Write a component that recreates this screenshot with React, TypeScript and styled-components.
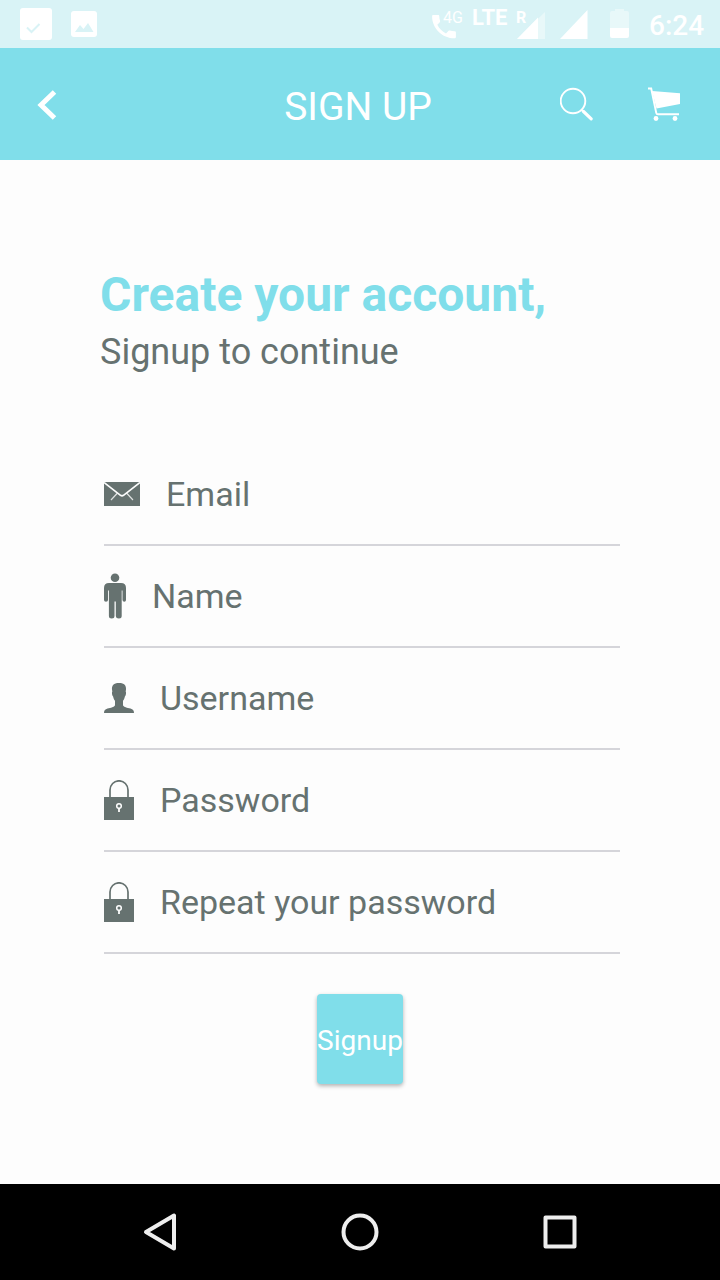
import React from "react";
import styled, { createGlobalStyle } from "styled-components";

const aqua = "#80deea";
const slate = "#667270";

const GlobalStyle = createGlobalStyle`
  * { box-sizing: border-box; }
  body {
    margin: 0;
    background: #fdfdfd;
    font-family: Roboto, "Liberation Sans", sans-serif;
  }
`;

const Page = styled.div`
  display: flex;
  flex-direction: column;
  min-height: 100vh;
`;

const StatusBar = styled.div`
  display: flex;
  align-items: center;
  justify-content: space-between;
  height: 48px;
  padding: 0 16px 0 20px;
  background: #d9f3f6;
  color: #fff;
`;

const StatusGroup = styled.div<{ $gap: number }>`
  display: flex;
  align-items: center;
  gap: ${(p) => p.$gap}px;
`;

const Indicator = styled.div`
  position: relative;
  display: flex;
`;

const Badge = styled.span<{ $left: number; $top: number; $bold?: boolean }>`
  position: absolute;
  left: ${(p) => p.$left}px;
  top: ${(p) => p.$top}px;
  font-size: 16px;
  line-height: 16px;
  font-weight: ${(p) => (p.$bold ? 700 : 400)};
`;

const Network = styled.span`
  width: 36px;
  height: 32px;
  font-size: 22px;
  line-height: 20px;
  font-weight: 700;
`;

const Clock = styled.time`
  width: 55px;
  padding-top: 4px;
  font-size: 28px;
  line-height: 32px;
  font-weight: 500;
  white-space: nowrap;
`;

const Header = styled.header`
  display: grid;
  grid-template-columns: 1fr auto 1fr;
  align-items: center;
  height: 112px;
  padding: 2px 40px 0 36px;
  background: ${aqua};
  color: #fff;
`;

const HeaderTitle = styled.h1`
  margin: 0;
  padding-top: 4px;
  font-size: 39px;
  line-height: 44px;
  font-weight: 400;
`;

const Actions = styled.div`
  display: flex;
  justify-content: flex-end;
  gap: 52px;
`;

const IconButton = styled.button`
  display: flex;
  align-items: center;
  justify-self: start;
  padding: 0;
  border: 0;
  background: none;
  color: inherit;
  cursor: pointer;
`;

const Main = styled.main`
  flex: 1;
  padding: 107px 100px 100px;
`;

const Heading = styled.h2`
  margin: 0 0 8px;
  color: ${aqua};
  font-size: 48px;
  line-height: 56px;
  font-weight: 700;
`;

const Subheading = styled.p`
  margin: 0;
  color: ${slate};
  font-size: 36px;
  line-height: 42px;
`;

const Form = styled.form`
  display: flex;
  flex-direction: column;
  margin: 71px 0 0 4px;
`;

const Field = styled.label`
  display: flex;
  align-items: center;
  gap: 26px;
  height: 102px;
  border-bottom: 2px solid #d5d5da;
  color: ${slate};

  svg { flex: none; }
`;

const Input = styled.input`
  flex: 1;
  min-width: 0;
  padding: 0;
  border: 0;
  outline: 0;
  background: none;
  color: ${slate};
  font-family: inherit;
  font-size: 34px;
  line-height: 42px;

  &::placeholder { color: ${slate}; opacity: 1; }
`;

const SubmitRow = styled.div`
  display: flex;
  justify-content: center;
  padding: 40px 4px 0 0;
`;

const SubmitButton = styled.button`
  height: 90px;
  padding: 4px 0 0;
  border: 0;
  border-radius: 4px;
  background: ${aqua};
  box-shadow: 0 2px 4px rgba(0, 0, 0, 0.3);
  color: #fff;
  font-family: inherit;
  font-size: 28px;
  line-height: 32px;
  cursor: pointer;
`;

const NavBar = styled.nav`
  display: grid;
  grid-template-columns: repeat(3, 1fr);
  height: 96px;
  padding: 0 60px;
  background: #000;
  color: #eee;
`;

const NavButton = styled(IconButton)`
  justify-self: stretch;
  justify-content: center;
`;

const TaskIcon = () => (
  <svg width="32" height="32" viewBox="0 0 32 32" aria-hidden="true">
    <rect width="32" height="32" rx="3" fill="#fff" />
    <path d="M7 19.500l4.500 4.500 8-8" fill="none" stroke="#d9f3f6" strokeWidth="2" />
  </svg>
);

const PhotoIcon = () => (
  <svg width="26" height="26" viewBox="0 0 26 26" aria-hidden="true">
    <rect width="26" height="26" rx="3" fill="#fff" />
    <path d="M4 21l5-7 3.500 4 4.500-6 5.500 9z" fill="#d9f3f6" />
  </svg>
);

const CallIcon = () => (
  <svg width="32" height="32" viewBox="0 0 32 32" fill="currentColor" aria-hidden="true">
    <path d="M1.300 7h4.800c.7 0 1.200.5 1.200 1.200 0 1.700.3 3.300.8 4.800.1.500 0 1-.3 1.300l-2.500 2.500c1.900 3.800 4.900 6.700 8.700 8.600l2.600-2.600c.4-.4.900-.5 1.300-.3 1.500.5 3 .7 4.700.7.700 0 1.300.5 1.300 1.200V29c0 .7-.6 1.300-1.300 1.300C10.100 30.300.1 20.300.1 8.200.1 7.500.6 7 1.300 7z" />
  </svg>
);

const SignalIcon = ({ weak, width }: { weak?: boolean; width: number }) => (
  <svg width={width} height="32" viewBox={`0 0 ${width} 32`} fill="currentColor" aria-hidden="true">
    {weak ? (
      <>
        <path d="M29 4v27H1z" opacity="0.4" />
        <path d="M22 9.500v21.500H1z" />
      </>
    ) : (
      <path d="M27.500 2v29H0z" />
    )}
  </svg>
);

const BatteryIcon = () => (
  <svg width="31" height="32" viewBox="0 0 31 32" fill="currentColor" aria-hidden="true">
    <path d="M0 5q0-2 2-2h3V1h9v2h3q2 0 2 2v15H0z" opacity="0.4" />
    <path d="M0 20h19v8q0 2-2 2H2q-2 0-2-2z" />
  </svg>
);

const BackIcon = () => (
  <svg width="24" height="32" viewBox="0 0 24 32" fill="none" stroke="currentColor" strokeWidth="5" aria-hidden="true">
    <path d="M18.500 3L5 16 18.500 29" />
  </svg>
);

const SearchIcon = () => (
  <svg width="36" height="36" viewBox="0 0 36 36" fill="none" stroke="currentColor" aria-hidden="true">
    <circle cx="13" cy="14" r="12.300" strokeWidth="1.900" />
    <path d="M21.500 23l2.500 2" strokeWidth="2.200" />
    <path d="M23.500 24.500l7.700 7.300" strokeWidth="3.200" strokeLinecap="round" />
  </svg>
);

const CartIcon = () => (
  <svg width="32" height="36" viewBox="0 0 32 36" fill="currentColor" aria-hidden="true">
    <path d="M4 4l28 2.200v10.800L8.500 21.500z" />
    <path d="M0 1.500h3.200l5 24.200c.2 1 .8 1.600 1.800 1.600H31" fill="none" stroke="currentColor" strokeWidth="1.900" />
    <circle cx="8" cy="31.500" r="2.400" />
    <circle cx="27" cy="31.500" r="2.400" />
  </svg>
);

const MailIcon = () => (
  <svg width="36" height="24" viewBox="0 0 36 24" aria-hidden="true">
    <rect width="36" height="24" fill="currentColor" />
    <path d="M0 0.500L16.500 13.300q1.500 1 3 0L36 0.500" fill="none" stroke="#fdfdfd" strokeWidth="1.700" />
    <path d="M13.500 11L7 18M22.500 11l6.500 7" fill="none" stroke="#fdfdfd" strokeWidth="1.200" opacity="0.8" />
  </svg>
);

const PersonIcon = () => (
  <svg width="22" height="46" viewBox="0 0 22 46" fill="currentColor" aria-hidden="true">
    <circle cx="11" cy="4.700" r="4.300" />
    <path d="M5 10h12q5 0 5 5v12q0 1.800-1.700 1.800T18.500 27V17.500h-.8V43q0 2.500-2.800 2.500T11.800 43V28.500h-1.300V43q0 2.500-2.800 2.500T4.900 43V17.500H4V27q0 1.800-2 1.800T0 27V15q0-5 5-5z" />
  </svg>
);

const UserIcon = () => (
  <svg width="30" height="30" viewBox="0 0 30 30" fill="currentColor" aria-hidden="true">
    <path d="M15 0c5.500 0 7.300 2.700 7 6.500l-.3 2c.7.800.3 4-.8 5-.4 2-1 3.200-1.900 4.300v4.400c1 2.300 4 2.200 7.500 3.400 2.300.8 3.500 2 3.500 4.400H0c0-2.400 1.200-3.600 3.500-4.400 3.500-1.200 6.500-1.100 7.500-3.400v-4.400c-.9-1.100-1.500-2.300-1.900-4.300-1.100-1-1.500-4.200-.8-5L8 6.500C7.700 2.700 9.500 0 15 0z" />
  </svg>
);

const LockIcon = () => (
  <svg width="30" height="40" viewBox="0 0 30 40" aria-hidden="true">
    <path d="M6 18V10a9 9.200 0 0 1 18 0v8" fill="none" stroke="currentColor" strokeWidth="1.700" />
    <rect y="17" width="30" height="23" fill="currentColor" />
    <circle cx="15" cy="26" r="2.300" fill="none" stroke="#fdfdfd" strokeWidth="1.500" />
    <path d="M15 28v4" stroke="#fdfdfd" strokeWidth="1.800" />
  </svg>
);

const fields = [
  { name: "email", label: "Email", type: "email", Icon: MailIcon },
  { name: "name", label: "Name", type: "text", Icon: PersonIcon },
  { name: "username", label: "Username", type: "text", Icon: UserIcon },
  { name: "password", label: "Password", type: "password", Icon: LockIcon },
  { name: "repeat", label: "Repeat your password", type: "password", Icon: LockIcon },
];

export default function App() {
  return (
    <>
      <GlobalStyle />
      <Page>
        <StatusBar>
          <StatusGroup $gap={19}>
            <TaskIcon />
            <PhotoIcon />
          </StatusGroup>
          <StatusGroup $gap={8}>
            <Indicator>
              <CallIcon />
              <Badge $left={11} $top={2}>4G</Badge>
            </Indicator>
            <Network>LTE</Network>
            <Indicator>
              <SignalIcon weak width={36} />
              <Badge $left={0} $top={2} $bold>R</Badge>
            </Indicator>
            <SignalIcon width={42} />
            <BatteryIcon />
            <Clock>6:24</Clock>
          </StatusGroup>
        </StatusBar>
        <Header>
          <IconButton type="button" aria-label="Back"><BackIcon /></IconButton>
          <HeaderTitle>SIGN UP</HeaderTitle>
          <Actions>
            <IconButton type="button" aria-label="Search"><SearchIcon /></IconButton>
            <IconButton type="button" aria-label="Cart"><CartIcon /></IconButton>
          </Actions>
        </Header>
        <Main>
          <Heading>Create your account,</Heading>
          <Subheading>Signup to continue</Subheading>
          <Form onSubmit={(e) => e.preventDefault()}>
            {fields.map(({ name, label, type, Icon }) => (
              <Field key={name}>
                <Icon />
                <Input name={name} type={type} placeholder={label} aria-label={label} />
              </Field>
            ))}
            <SubmitRow>
              <SubmitButton type="submit">Signup</SubmitButton>
            </SubmitRow>
          </Form>
        </Main>
        <NavBar>
          <NavButton type="button" aria-label="Back">
            <svg width="40" height="40" viewBox="0 0 40 40" fill="none" stroke="currentColor" strokeWidth="4" strokeLinejoin="round">
              <path d="M34 3.500v33L6 20z" />
            </svg>
          </NavButton>
          <NavButton type="button" aria-label="Home">
            <svg width="40" height="40" viewBox="0 0 40 40" fill="none" stroke="currentColor" strokeWidth="4">
              <circle cx="20" cy="20" r="16.500" />
            </svg>
          </NavButton>
          <NavButton type="button" aria-label="Recent apps">
            <svg width="40" height="40" viewBox="0 0 40 40" fill="none" stroke="currentColor" strokeWidth="4" strokeLinejoin="round">
              <rect x="5.500" y="5.500" width="29" height="29" />
            </svg>
          </NavButton>
        </NavBar>
      </Page>
    </>
  );
}
